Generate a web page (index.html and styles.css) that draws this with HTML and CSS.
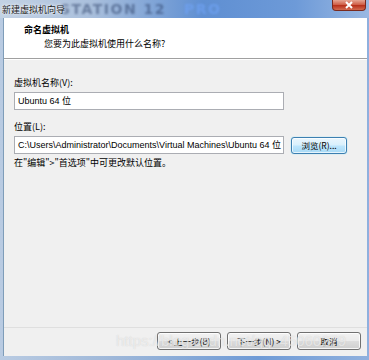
FILE: index.html
```html
<!DOCTYPE html>
<html lang="zh-CN">
<head>
<meta charset="utf-8">
<title>新建虚拟机向导</title>
<link rel="stylesheet" href="styles.css">
</head>
<body>
<div class="window">
  <div class="titlebar">
    <span class="bg-brand"><span class="brand-dark">STATION 12</span><span class="brand-light">PRO</span></span>
    <span class="title">新建虚拟机向导</span>
    <span class="close">
      <svg width="10" height="8" viewBox="0 0 10 8"><path d="M2 1 L8 7 M8 1 L2 7" stroke="#fff" stroke-width="2" fill="none"/></svg>
    </span>
  </div>
  <div class="client">
    <div class="header">
      <div class="h-title">命名虚拟机</div>
      <div class="h-sub">您要为此虚拟机使用什么名称?</div>
    </div>
    <div class="body">
      <div class="field name-field">
        <div class="label">虚拟机名称(V):</div>
        <div class="input name-input">Ubuntu 64 位</div>
      </div>
      <div class="field">
        <div class="label">位置(L):</div>
        <div class="row">
          <div class="input">C:\Users\Administrator\Documents\Virtual Machines\Ubuntu 64 位</div>
          <div class="btn browse">浏览(R)...</div>
        </div>
        <div class="hint">在"编辑"&gt;"首选项"中可更改默认位置。</div>
      </div>
    </div>
    <div class="footer">
      <div class="btn">&lt; 上一步(B)</div>
      <div class="btn">下一步(N) &gt;</div>
      <div class="btn">取消</div>
      <div class="watermark">https://blog.csdn.net/qq_45060279</div>
    </div>
  </div>
</div>
</body>
</html>
```

FILE: styles.css
```css
* { box-sizing: border-box; }
html, body {
  margin: 0;
  padding: 0;
  width: 369px;
  height: 360px;
  overflow: hidden;
}
body {
  font-family: "Liberation Sans", "Noto Sans CJK SC", sans-serif;
  font-size: 9px;
  color: #000;
}
.window {
  width: 369px;
  height: 360px;
  display: flex;
  flex-direction: column;
  background: linear-gradient(90deg, #b9cbe2 0%, #9fb8d9 30%, #6f9bd6 70%, #8fb0de 100%);
  padding: 0 2px 4px 3px;
}
.titlebar {
  position: relative;
  height: 18px;
  flex: none;
  display: flex;
  align-items: center;
  margin: 0 -2px 0 -3px;
  padding-left: 2px;
  background: linear-gradient(90deg, #c3d2e4 0%, #a9bfdc 25%, #5f8fd2 55%, #6d9ad8 80%, #9ab8e2 100%);
  overflow: hidden;
}
.bg-brand {
  position: absolute;
  left: 60px;
  top: 2px;
  height: 14px;
  line-height: 14px;
  font-family: "DejaVu Sans", sans-serif;
  font-weight: bold;
  font-size: 14px;
  letter-spacing: 1.5px;
  filter: blur(1.2px);
  white-space: nowrap;
}
.brand-dark { color: rgba(40, 60, 100, 0.5); }
.brand-light { color: rgba(110, 160, 240, 0.8); margin-left: 18px; }
.title {
  position: relative;
  font-family: "Noto Sans CJK SC", sans-serif;
  font-size: 9px;
  color: #1a1a1a;
  text-shadow: 0 0 4px rgba(255,255,255,0.9), 0 0 2px rgba(255,255,255,0.9);
}
.close {
  position: absolute;
  right: 3px;
  top: 0;
  width: 34px;
  height: 11px;
  border: 1px solid #7a2a1e;
  border-top: none;
  border-radius: 0 0 4px 4px;
  background: linear-gradient(180deg, #e6a593 0%, #d0614a 45%, #b8321c 55%, #d36a50 100%);
  display: flex;
  align-items: center;
  justify-content: center;
}
.client {
  flex: 1;
  display: flex;
  flex-direction: column;
  background: #f0f0f0;
  border-left: 1px solid #7f9db9;
}
.header {
  height: 41px;
  flex: none;
  background: #fff;
  border-bottom: 1px solid #a0a0a0;
  box-shadow: 0 1px 0 #fff;
  padding: 5px 0 0 20px;
  font-family: "Noto Sans CJK SC", sans-serif;
}
.h-title {
  font-weight: bold;
  font-size: 9px;
  line-height: 14px;
}
.h-sub {
  font-size: 9px;
  line-height: 14px;
  padding-left: 20px;
}
.body {
  flex: 1;
  padding: 17px 0 0 10px;
}
.field { display: flex; flex-direction: column; }
.name-field { margin-bottom: 10px; }
.label {
  font-family: "Noto Sans CJK SC", sans-serif;
  line-height: 14px;
  margin-bottom: 2px;
}
.input {
  width: 270px;
  height: 18px;
  background: #fff;
  border: 1px solid #abadb3;
  padding: 0 3px;
  line-height: 16px;
  white-space: nowrap;
  overflow: hidden;
  font-family: "Liberation Sans", "Noto Sans CJK SC", sans-serif;
}
.row {
  display: flex;
  align-items: center;
  gap: 7px;
}
.btn {
  height: 18px;
  width: 64px;
  border: 1px solid #707070;
  border-radius: 3px;
  background: linear-gradient(180deg, #f2f2f2 0%, #ebebeb 48%, #dddddd 52%, #cfcfcf 100%);
  box-shadow: inset 0 0 0 1px rgba(255,255,255,0.8);
  display: flex;
  align-items: center;
  justify-content: center;
  font-family: "Noto Sans CJK SC", sans-serif;
  font-size: 8.5px;
  white-space: nowrap;
}
.browse {
  width: 56px;
  height: 17px;
  border-color: #3c7fb1;
  background: linear-gradient(180deg, #eaf6fd 0%, #d9f0fc 48%, #bee6fd 52%, #a7d9f5 100%);
  box-shadow: inset 0 0 0 1px rgba(255,255,255,0.7), 0 0 1px #48d0ff;
}
.hint {
  font-family: "Noto Sans CJK SC", sans-serif;
  line-height: 14px;
  margin-top: 2px;
}
.footer {
  position: relative;
  height: 29px;
  flex: none;
  border-top: 1px solid #dfdfdf;
  display: flex;
  justify-content: flex-end;
  align-items: flex-start;
  gap: 6px;
  padding: 4px 6px 0 0;
}
.watermark {
  position: absolute;
  left: 112px;
  top: 4px;
  font-family: "Liberation Sans", sans-serif;
  font-size: 15px;
  line-height: 18px;
  color: rgba(255,255,255,0.55);
  text-shadow: 0 0 1px rgba(180,180,180,0.6);
  white-space: nowrap;
  pointer-events: none;
}
```
